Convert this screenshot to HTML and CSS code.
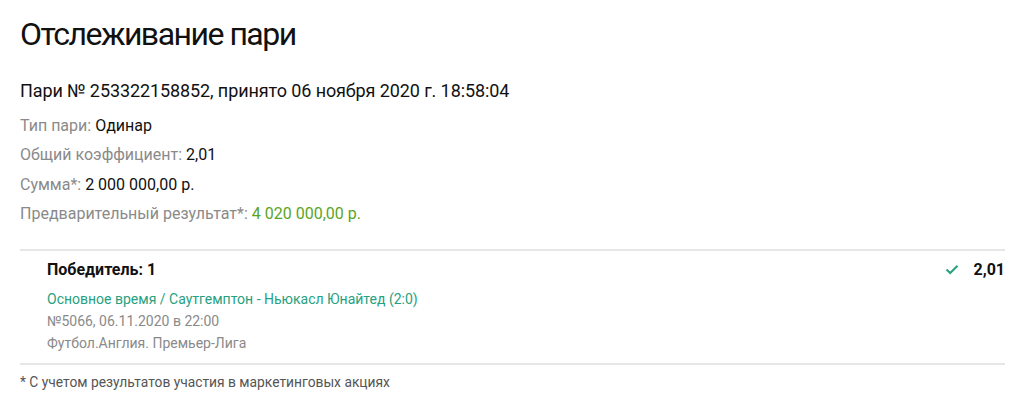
FILE: index.html
```html
<!DOCTYPE html>
<html lang="ru">
<head>
  <meta charset="UTF-8">
  <title>Отслеживание пари</title>
  <link rel="stylesheet" href="styles.css">
</head>
<body>
  <div class="page">
    <h1 class="title">Отслеживание пари</h1>

    <div class="bet-head">Пари № 253322158852, принято 06 ноября 2020 г. 18:58:04</div>

    <ul class="bet-info">
      <li><span class="label">Тип пари:</span> Одинар</li>
      <li><span class="label">Общий коэффициент:</span> 2,01</li>
      <li><span class="label">Сумма*:</span> 2 000 000,00 р.</li>
      <li><span class="label">Предварительный результат*:</span> <span class="win">4 020 000,00 р.</span></li>
    </ul>

    <div class="event">
      <div class="event-body">
        <div class="event-outcome">Победитель: 1</div>
        <div class="event-name">Основное время / Саутгемптон - Ньюкасл Юнайтед (2:0)</div>
        <div class="event-meta">№5066, 06.11.2020 в 22:00</div>
        <div class="event-meta">Футбол.Англия. Премьер-Лига</div>
      </div>
      <div class="event-odds">
        <svg class="check" width="14" height="11" viewBox="0 0 14 11">
          <path d="M1.5 5.5 L5.2 9 L12.5 1.8" fill="none" stroke="#27a17f" stroke-width="2"/>
        </svg>
        <span class="odds">2,01</span>
      </div>
    </div>

    <p class="note">* С учетом результатов участия в маркетинговых акциях</p>
  </div>
</body>
</html>
```

FILE: styles.css
```css
body {
  margin: 0;
  font-family: Roboto, "Liberation Sans", sans-serif;
  color: #111;
  background: #fff;
}

.page {
  padding: 0 19px 0 20px;
}

.title {
  margin: 0;
  padding-top: 14px;
  font-size: 32px;
  font-weight: 400;
  line-height: 40px;
  letter-spacing: -1.5px;
}

.bet-head {
  margin-top: 25px;
  font-size: 18px;
  line-height: 24px;
  letter-spacing: -0.1px;
}

.bet-info {
  list-style: none;
  margin: 8px 0 0;
  padding: 0;
  font-size: 16px;
}

.bet-info li {
  line-height: 29.4px;
}

.label {
  color: #8a8a8a;
}

.win {
  color: #5aa51e;
}

.event {
  display: flex;
  justify-content: space-between;
  margin-top: 20px;
  padding: 8px 0 9px 27px;
  border-top: 2px solid #e6e6e6;
  border-bottom: 2px solid #e6e6e6;
}

.event-outcome {
  font-weight: 700;
  font-size: 16px;
  line-height: 22px;
}

.event-name {
  margin-top: 8px;
  color: #27a17f;
  font-size: 14px;
  line-height: 21px;
}

.event-meta {
  color: #8a8a8a;
  font-size: 14px;
  line-height: 22px;
}

.event-odds {
  display: flex;
  align-items: center;
  align-self: flex-start;
  gap: 15px;
  height: 22px;
}

.odds {
  font-weight: 700;
  font-size: 16px;
}

.note {
  margin: 7px 0 0;
  color: #555;
  font-size: 13.8px;
  line-height: 20px;
}
```
